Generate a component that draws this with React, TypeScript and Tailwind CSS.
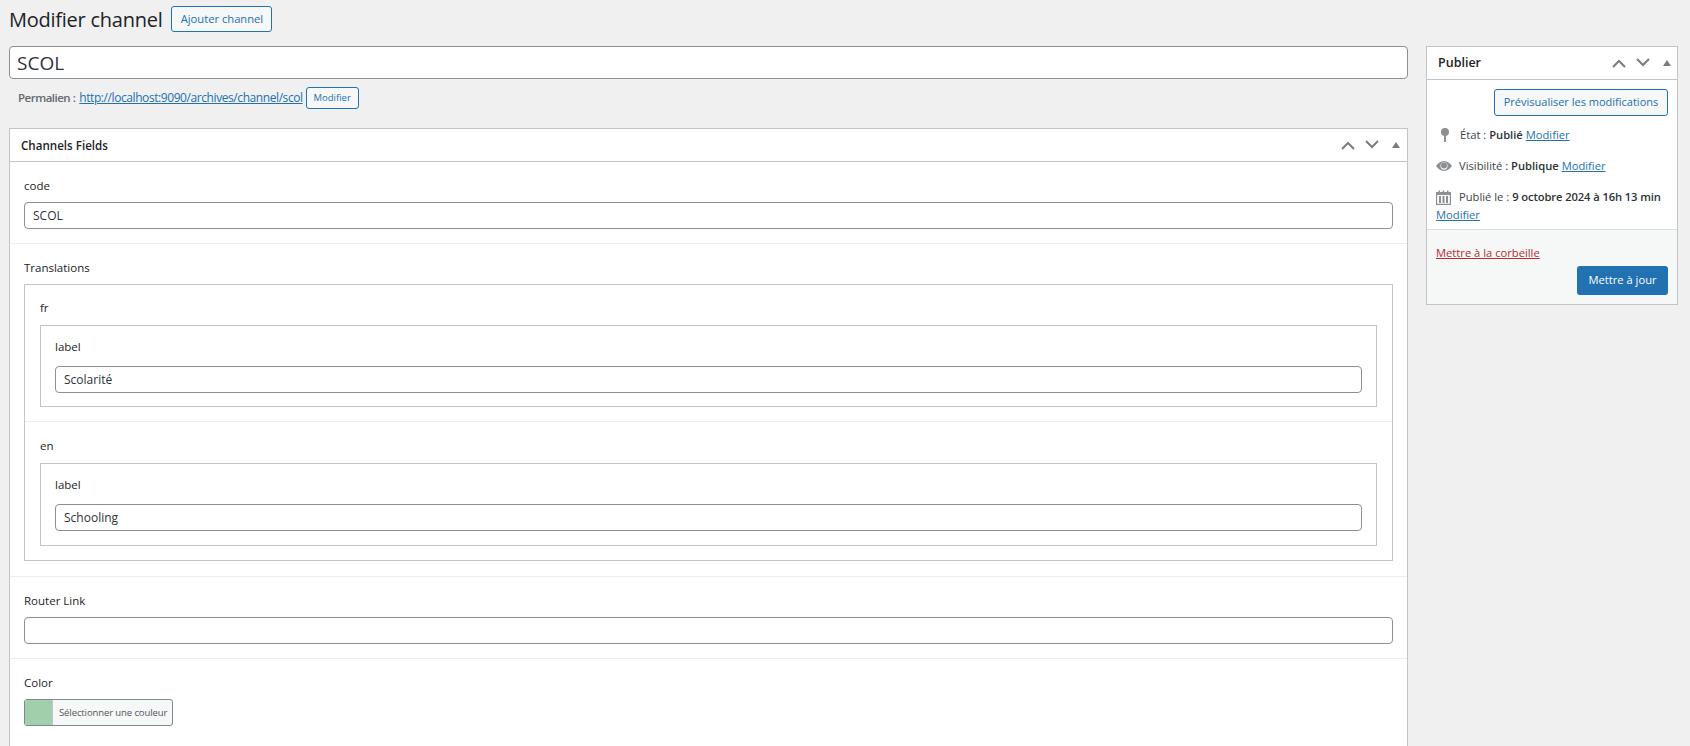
import React from "react";

const font = { fontFamily: '"Open Sans", "Noto Sans", sans-serif' };

function Handles() {
  return (
    <div className="flex items-center gap-[8px] text-[#787c82]">
      <svg width="16" height="10" viewBox="0 0 16 10" fill="none" stroke="currentColor" strokeWidth="2"><path d="M2 9 L8 3 L14 9" /></svg>
      <svg width="16" height="10" viewBox="0 0 16 10" fill="none" stroke="currentColor" strokeWidth="2"><path d="M2 1 L8 7 L14 1" /></svg>
      <svg className="ml-[4px]" width="8" height="6" viewBox="0 0 8 6" fill="currentColor"><path d="M4 0 L8 6 L0 6 Z" /></svg>
    </div>
  );
}

function TextField({ value }: { value: string }) {
  return (
    <input
      readOnly
      value={value}
      className="block w-full h-[27px] rounded-[4px] border border-[#8c8f94] bg-white px-[8px] text-[12px] text-[#2c3338] outline-none"
    />
  );
}

function Label({ children, tight }: { children: React.ReactNode; tight?: boolean }) {
  return <div className={"text-[11.5px] leading-[16px] font-normal text-[#1d2327] " + (tight ? "mb-[11px]" : "mb-[8px]")}>{children}</div>;
}

function LangBlock({ lang, value, second }: { lang: string; value: string; second?: boolean }) {
  return (
    <div className={"px-[15px] pb-[14px] " + (second ? "pt-[16px] border-t border-[#eeeeee]" : "pt-[15px]")}>
      <div className="text-[11.5px] leading-[16px] text-[#1d2327] mb-[9px]">{lang}</div>
      <div className={"border border-[#c3c4c7] px-[14px] pt-[13px] " + (second ? "pb-[14px]" : "pb-[13px]")}>
        <Label tight>label</Label>
        <TextField value={value} />
      </div>
    </div>
  );
}

function Section({ children, border, extra }: { children: React.ReactNode; border?: boolean; extra?: boolean }) {
  return (
    <div className={"px-[14px] pt-[16px] " + (extra ? "pb-[15px] " : "pb-[14px] ") + (border ? "border-t border-[#eeeeee]" : "")}>
      {children}
    </div>
  );
}

const link = "text-[#2271b1] underline";

export default function App() {
  return (
    <div style={font} className="h-[746px] overflow-hidden bg-[#f0f0f1] text-[#3c434a] text-[12px]">
      <div className="flex items-start gap-[9px] pl-[9px] pt-[6px] h-[46px]">
        <h1 className="text-[20px] leading-[27px] font-normal tracking-[-0.25px] text-[#1d2327]">Modifier channel</h1>
        <button className="h-[26px] w-[101px] rounded-[3px] border border-[#2271b1] bg-[#f6f7f7] text-[11.2px] text-[#2271b1]">Ajouter channel</button>
      </div>

      <div className="flex items-start gap-[18px] pl-[9px] pr-[12px]">
        <main className="flex-1 min-w-0">
          <input
            readOnly
            value="SCOL"
            className="block w-full h-[33px] rounded-[4px] border border-[#8c8f94] bg-white px-[7px] text-[19px] text-[#2c3338] outline-none"
          />
          <div className="flex items-center h-[22px] mt-[8px] pl-[9px] text-[11.5px] text-[#646970]">
            <span className="font-semibold mr-[4px] tracking-[-0.5px]">Permalien :</span>
            <a className={link + " mr-[3px] tracking-[-0.42px] text-[12px]"}>http://localhost:9090/archives/channel/scol</a>
            <button className="h-[22px] w-[53px] rounded-[3px] border border-[#2271b1] bg-[#f6f7f7] text-[9.5px] text-[#2271b1]">Modifier</button>
          </div>

          <section className="mt-[19px] border border-[#c3c4c7] bg-white">
            <div className="flex items-center justify-between h-[33px] border-b border-[#c3c4c7] pl-[11px] pr-[7px]">
              <h2 className="pt-[1px] text-[11.6px] font-semibold text-[#1d2327]">Channels Fields</h2>
              <Handles />
            </div>

            <Section>
              <Label>code</Label>
              <TextField value="SCOL" />
            </Section>

            <Section border extra>
              <Label>Translations</Label>
              <div className="border border-[#c3c4c7]">
                <LangBlock lang="fr" value="Scolarité" />
                <LangBlock lang="en" value="Schooling" second />
              </div>
            </Section>

            <Section border>
              <Label>Router Link</Label>
              <TextField value="" />
            </Section>

            <Section border>
              <Label>Color</Label>
              <button className="flex h-[27px] w-[149px] overflow-hidden rounded-[3px] border border-[#7e8993] bg-[#f6f7f7] text-[9.5px] text-[#50575e]">
                <span className="h-full w-[28px] shrink-0 border-r border-[#c3c4c7] bg-[#a1cfac]" />
                <span className="pl-[6px] leading-[25px] whitespace-nowrap tracking-[-0.1px]">Sélectionner une couleur</span>
              </button>
              <div className="h-[40px]" />
            </Section>
          </section>
        </main>

        <aside className="w-[252px] shrink-0 border border-[#c3c4c7] bg-white">
          <div className="flex items-center justify-between h-[33px] border-b border-[#c3c4c7] pl-[11px] pr-[6px]">
            <h2 className="text-[12.5px] font-semibold text-[#1d2327]">Publier</h2>
            <Handles />
          </div>
          <div className="px-[9px] pt-[9px] pb-[5px]">
            <div className="flex justify-end">
              <button className="h-[27px] w-[174px] rounded-[3px] border border-[#2271b1] bg-[#f6f7f7] text-[11px] whitespace-nowrap text-[#2271b1]">Prévisualiser les modifications</button>
            </div>
            <div className="flex items-center h-[18px] mt-[10px] whitespace-nowrap text-[11.2px]">
              <svg className="ml-[4px] mr-[10px] text-[#8c8f94]" width="10" height="16" viewBox="0 0 10 16" fill="currentColor">
                <circle cx="5" cy="5" r="4" />
                <rect x="4" y="6" width="2" height="9" />
              </svg>
              <span>État : <b className="font-semibold text-[#2c3338]">Publié</b> <a className={link}>Modifier</a></span>
            </div>
            <div className="flex items-center h-[18px] mt-[13px] whitespace-nowrap text-[11.2px]">
              <svg className="mr-[7px] text-[#8c8f94]" width="16" height="12" viewBox="0 0 16 12" fill="currentColor">
                <path fillRule="evenodd" d="M8 1 C4.5 1 1.8 3.5 0 6 C1.8 8.5 4.5 11 8 11 C11.5 11 14.2 8.5 16 6 C14.2 3.5 11.5 1 8 1 Z M8 2.2 C10 2.2 11.6 3.9 11.6 6 C11.6 8.1 10 9.8 8 9.8 C6 9.8 4.4 8.1 4.4 6 C4.4 3.9 6 2.2 8 2.2 Z" />
                <circle cx="8" cy="5.5" r="3" />
              </svg>
              <span>Visibilité : <b className="font-semibold text-[#2c3338]">Publique</b> <a className={link}>Modifier</a></span>
            </div>
            <div className="mt-[13px] text-[11.2px] leading-[18px] whitespace-nowrap">
              <div className="flex items-center h-[18px]">
                <svg className="mr-[8px] text-[#8c8f94]" width="15" height="15" viewBox="0 0 15 15" fill="currentColor">
                  <path fillRule="evenodd" d="M0 2 H2.5 V0.5 H4 V2 H6.7 V0.5 H8.2 V2 H11 V0.5 H12.5 V2 H15 V15 H0 Z M1.2 5 V13.8 H13.8 V5 Z" />
                  <rect x="3" y="6" width="2" height="7" />
                  <rect x="6.5" y="6" width="2" height="7" />
                  <rect x="10" y="6" width="2" height="7" />
                </svg>
                <span>Publié le : <b className="font-semibold text-[#2c3338] tracking-[-0.1px]">9 octobre 2024 à 16h 13 min</b></span>
              </div>
              <a className={link}>Modifier</a>
            </div>
          </div>
          <div className="border-t border-[#dcdcde] bg-[#f6f7f7] px-[9px] pt-[14px] pb-[9px]">
            <a className="block text-[11.2px] leading-[18px] text-[#b32d2e] underline">Mettre à la corbeille</a>
            <div className="flex justify-end mt-[4px]">
              <button className="h-[29px] w-[91px] rounded-[3px] bg-[#2271b1] text-[11.2px] text-white">Mettre à jour</button>
            </div>
          </div>
        </aside>
      </div>
    </div>
  );
}
